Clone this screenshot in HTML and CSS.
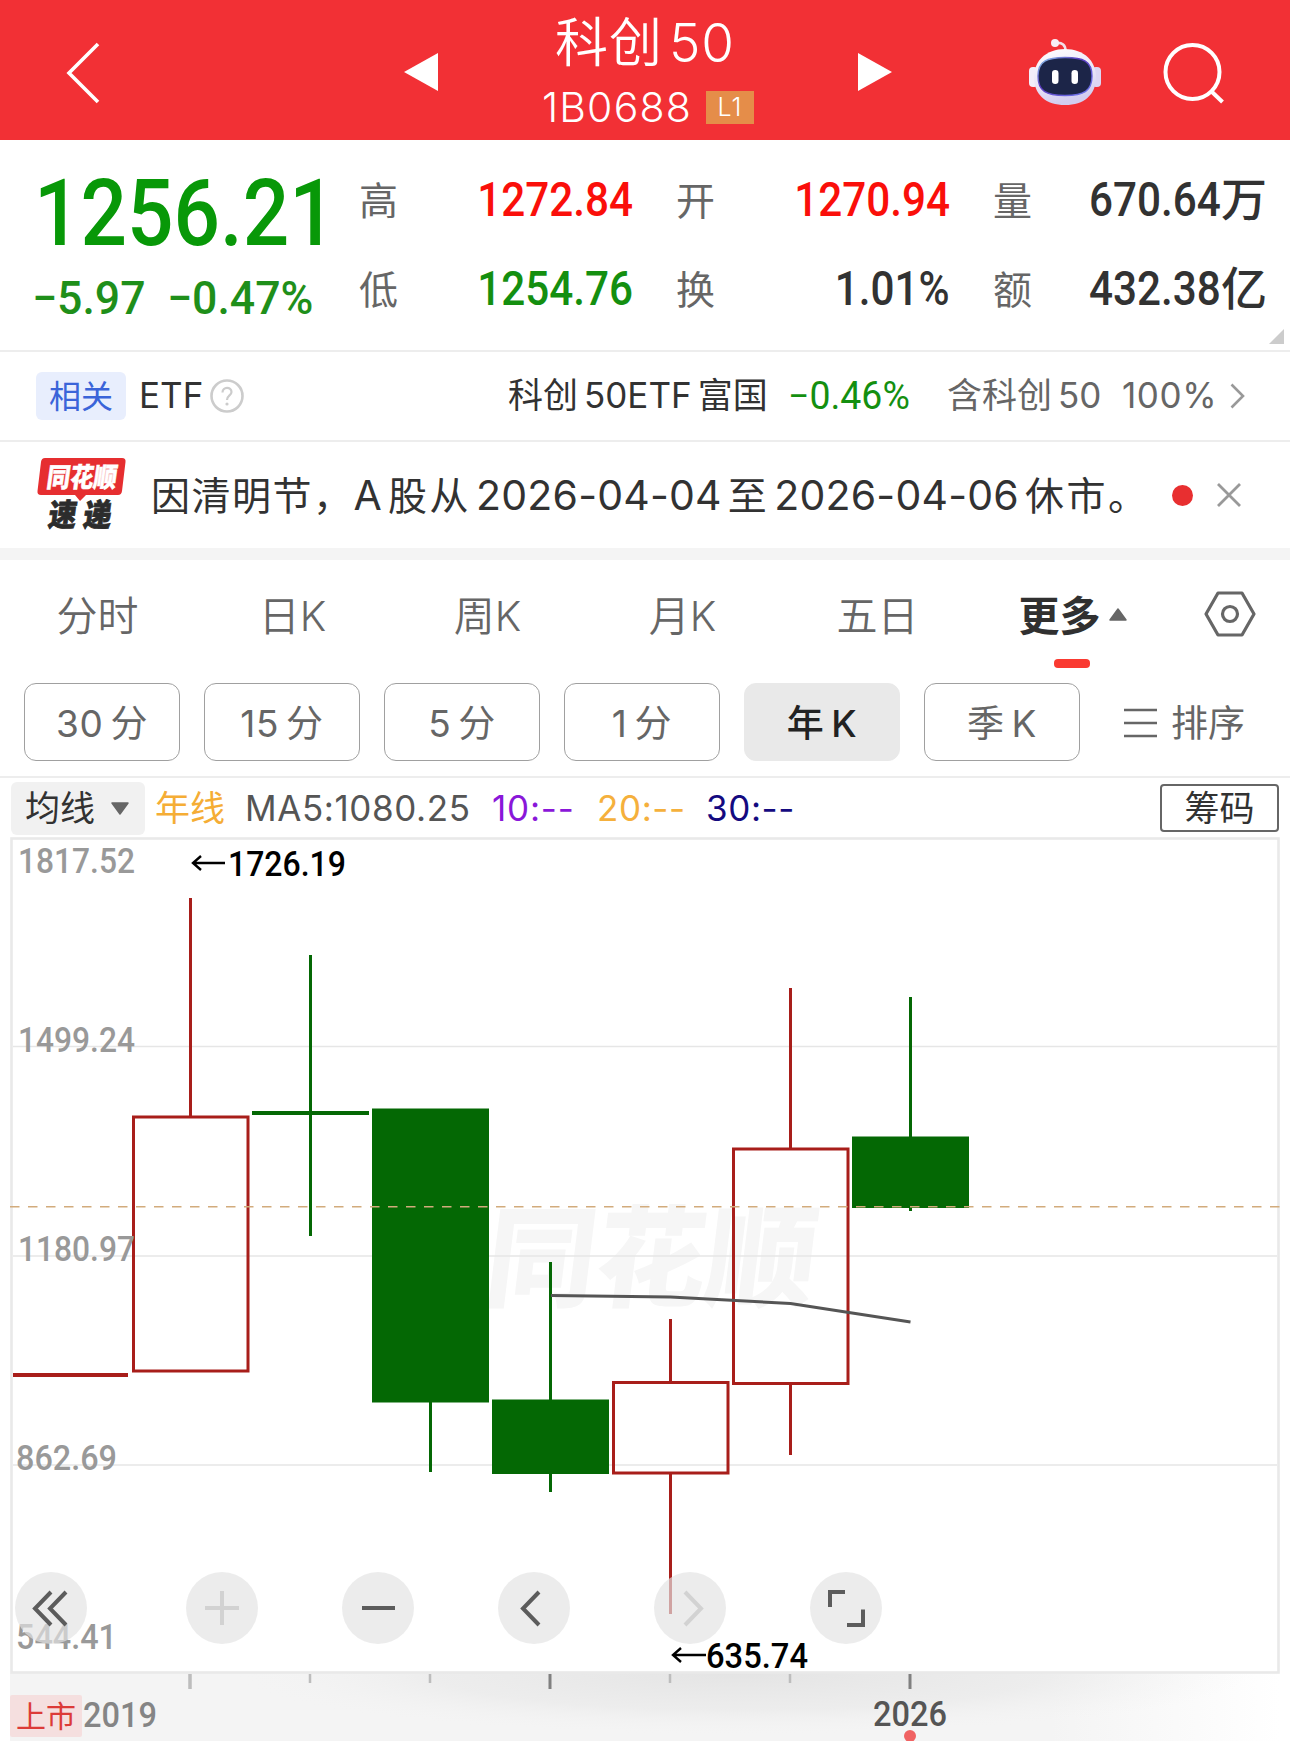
FILE: index.html
```html
<!DOCTYPE html>
<html lang="zh-CN">
<head>
    <meta charset="UTF-8">
    <meta name="viewport" content="width=device-width, initial-scale=1.0">
    <title>科创50 1B0688</title>
    <link rel="stylesheet" href="styles.css">
</head>
<body>
    <!-- 顶部导航 -->
    <header class="header">
        <svg class="back" width="34" height="62" viewBox="0 0 34 62"><path d="M32 2L3 31L32 60" fill="none" stroke="#fff" stroke-width="3.6"/></svg>
        <svg class="switch" width="34" height="38" viewBox="0 0 34 38"><path d="M0 19L34 0V38Z" fill="#fff"/></svg>
        <div class="header-title">
            <div class="stock-name">科创<span class="thin-gap">50</span></div>
            <div class="stock-code">1B0688<span class="level">L1</span></div>
        </div>
        <svg class="switch" width="34" height="38" viewBox="0 0 34 38"><path d="M34 19L0 0V38Z" fill="#fff"/></svg>
        <div class="header-icons">
            <!-- 机器人 -->
            <svg class="robot" width="72" height="68" viewBox="0 0 72 68">
                <defs>
                    <linearGradient id="head" x1="0" y1="0" x2="0.3" y2="1">
                        <stop offset="0" stop-color="#fff"/>
                        <stop offset="0.6" stop-color="#eae5f7"/>
                        <stop offset="1" stop-color="#d2cdf0"/>
                    </linearGradient>
                    <linearGradient id="rim" x1="0" y1="0" x2="1" y2="1">
                        <stop offset="0" stop-color="#8fd0ee"/>
                        <stop offset="0.4" stop-color="#5b3ac0"/>
                        <stop offset="1" stop-color="#6f7cf0"/>
                    </linearGradient>
                </defs>
                <path d="M27 4Q36.500 3 36.500 12" fill="none" stroke="#f3dfe8" stroke-width="2.600"/>
                <circle cx="26" cy="4" r="4" fill="#f8eef5"/>
                <rect x="0" y="28" width="9" height="20" rx="4" fill="#f3eefa"/>
                <rect x="63" y="28" width="9" height="20" rx="4" fill="#ddd6f3"/>
                <path d="M36 10C55 10 67 22 67 38C67 56 55 66 36 66C17 66 5 56 5 38C5 22 17 10 36 10Z" fill="url(#head)"/>
                <path d="M36 18.500C54 18.500 63 22 63 37C63 52 55 56.500 36 56.500C17 56.500 9 52 9 37C9 22 18 18.500 36 18.500Z" fill="#1c2548" stroke="url(#rim)" stroke-width="1.400"/>
                <rect x="23" y="31" width="6.500" height="14" rx="3.200" fill="#fff"/>
                <rect x="42.500" y="31" width="6.500" height="14" rx="3.200" fill="#fff"/>
            </svg>
            <svg width="62" height="62" viewBox="0 0 62 62" fill="none" stroke="#fff" stroke-width="4">
                <circle cx="29.500" cy="30" r="27"/>
                <path d="M48 49L59.500 60"/>
            </svg>
        </div>
    </header>

    <!-- 行情数据 -->
    <section class="quote">
        <div class="price">
            <div class="price-now"><span class="num">1256.21</span></div>
            <div class="price-change"><span class="num">−5.97</span><span class="num">−0.47%</span></div>
        </div>
        <div class="stats">
            <div class="stat"><label>高</label><b class="up"><span class="num">1272.84</span></b></div>
            <div class="stat"><label>开</label><b class="up"><span class="num">1270.94</span></b></div>
            <div class="stat"><label>量</label><b><span class="num">670.64</span>万</b></div>
            <div class="stat"><label>低</label><b class="down"><span class="num">1254.76</span></b></div>
            <div class="stat"><label>换</label><b><span class="num">1.01%</span></b></div>
            <div class="stat"><label>额</label><b><span class="num">432.38</span>亿</b></div>
        </div>
        <div class="corner"></div>
    </section>

    <!-- 相关ETF -->
    <section class="etf">
        <span class="etf-tag">相关</span>
        <span class="etf-label">ETF</span>
        <svg width="34" height="34" viewBox="0 0 34 34" fill="none" stroke="#ccc" stroke-width="2.600">
            <circle cx="17" cy="17" r="15.500"/>
            <path d="M12.500 13.500C12.500 7.500 21.500 7.500 21.500 13C21.500 16.500 17 16.500 17 21" stroke-width="2.200"/>
            <circle cx="17" cy="25" r="1.600" fill="#ccc" stroke="none"/>
        </svg>
        <span class="etf-name">科创<span class="thin-gap">50ETF</span><span class="thin-gap">富国</span></span>
        <span class="etf-change"><span class="num">−0.46%</span></span>
        <span class="etf-share">含科创<span class="thin-gap">50</span></span>
        <span class="etf-ratio">100%</span>
        <svg class="etf-arrow" width="15" height="26" viewBox="0 0 15 26"><path d="M1.500 1.500L13 13L1.500 24.500" fill="none" stroke="#999" stroke-width="2.600"/></svg>
    </section>

    <!-- 公告 -->
    <section class="news">
        <svg class="news-logo" width="90" height="76" viewBox="0 0 90 76">
            <path d="M8 1H85Q89 1 88.500 5L85 34Q84.500 38 81 38H49L43 44L38 38H4Q0 38 0.500 34L4 5Q4.500 1 8 1Z" fill="#e62e30"/>
            <g transform="skewX(-8)">
                <text class="logo-top" x="13" y="29.500" textLength="70" lengthAdjust="spacingAndGlyphs">同花顺</text>
                <text class="logo-bottom" x="20" y="69" textLength="28" lengthAdjust="spacingAndGlyphs">速</text>
                <text class="logo-bottom" x="55" y="69" textLength="28" lengthAdjust="spacingAndGlyphs">递</text>
            </g>
        </svg>
        <p class="news-text"><i class="lead">因清明节，</i>A<i class="thin-gap">股从</i>2026-04-04<i class="thin-gap">至</i>2026-04-06<i class="thin-gap">休市。</i></p>
        <span class="dot"></span>
        <svg width="26" height="26" viewBox="0 0 26 26"><path d="M2 2L24 24M24 2L2 24" fill="none" stroke="#999" stroke-width="2.800"/></svg>
    </section>

    <!-- 周期切换 -->
    <nav class="tabs">
        <div class="tab">分时</div>
        <div class="tab">日K</div>
        <div class="tab">周K</div>
        <div class="tab">月K</div>
        <div class="tab">五日</div>
        <div class="tab active">更多<svg width="18" height="13" viewBox="0 0 18 13"><path d="M9 1L17 12H1Z" fill="#666" stroke="#666" stroke-width="1.500" stroke-linejoin="round"/></svg></div>
        <svg class="setting" width="52" height="46" viewBox="0 0 52 46" fill="none" stroke="#666" stroke-width="3.200">
            <path d="M14 2H38L50 23L38 44H14L2 23Z" stroke-linejoin="round"/>
            <circle cx="26" cy="23" r="7.500"/>
        </svg>
    </nav>
    <div class="periods">
        <div class="period">30<span class="gap">分</span></div>
        <div class="period">15<span class="gap">分</span></div>
        <div class="period">5<span class="gap">分</span></div>
        <div class="period">1<span class="gap">分</span></div>
        <div class="period selected">年<span class="gap">K</span></div>
        <div class="period">季<span class="gap">K</span></div>
        <div class="sort">
            <svg width="33" height="30" viewBox="0 0 33 30"><path d="M0 2H33M0 15H33M0 28H33" stroke="#666" stroke-width="2.400"/></svg>
            排序
        </div>
    </div>

    <!-- 均线指标 -->
    <div class="ma">
        <div class="ma-select">均线<svg width="18" height="13" viewBox="0 0 18 13"><path d="M9 12L17 1H1Z" fill="#666" stroke="#666" stroke-width="1.500" stroke-linejoin="round"/></svg></div>
        <span class="ma-year">年线</span>
        <span class="ma5">MA5:1080.25</span>
        <span class="ma10">10:--</span>
        <span class="ma20">20:--</span>
        <span class="ma30">30:--</span>
        <div class="chips">筹码</div>
    </div>

    <!-- K线图 -->
    <div class="chart">
        <svg class="kline" width="1290" height="904" viewBox="0 837 1290 904">
            <defs>
                <radialGradient id="shade" cx="0.5" cy="0" r="0.5" gradientTransform="translate(0 0) scale(1 2)">
                    <stop offset="0" stop-color="#e4e4e4"/>
                    <stop offset="0.6" stop-color="#ebebeb" stop-opacity="0.8"/>
                    <stop offset="1" stop-color="#f4f4f4" stop-opacity="0"/>
                </radialGradient>
                <linearGradient id="fade" x1="0" x2="1">
                    <stop offset="0" stop-color="#f4f4f4"/>
                    <stop offset="0.82" stop-color="#f4f4f4"/>
                    <stop offset="1" stop-color="#fff"/>
                </linearGradient>
            </defs>

            <!-- 时间轴背景 -->
            <rect x="10" y="1673" width="1270" height="68" fill="url(#fade)"/>
            <rect x="230" y="1673" width="1020" height="62" fill="url(#shade)"/>

            <text class="watermark" transform="translate(482 1298) skewX(-7)" textLength="330" lengthAdjust="spacingAndGlyphs">同花顺</text>

            <!-- 边框和网格 -->
            <path d="M13 1046.500H1277M13 1256H1277M13 1465H1277" stroke="#e6e6e6" stroke-width="1.500"/>
            <rect x="11.500" y="838.500" width="1267" height="834" fill="none" stroke="#e9e9e9" stroke-width="2.600"/>

            <!-- K线 -->
            <g fill="none" stroke="#a81e1a" stroke-width="3">
                <path d="M13 1375H128" stroke-width="4"/>
                <path d="M190.500 898V1116M670.500 1319V1382M670.500 1473V1614M790.500 988V1148M790.500 1384V1455"/>
                <rect x="133.500" y="1117" width="114.500" height="254"/>
                <rect x="613.500" y="1382.500" width="114.500" height="90.500"/>
                <rect x="733.500" y="1149" width="114.500" height="234.500"/>
            </g>
            <g fill="#046804" stroke="none">
                <rect x="252" y="1111" width="117" height="4"/>
                <rect x="309" y="955" width="3" height="281"/>
                <rect x="372" y="1108.500" width="117" height="294"/>
                <rect x="429" y="1402" width="3" height="70"/>
                <rect x="492" y="1399.500" width="117" height="74.500"/>
                <rect x="549" y="1262" width="3" height="230"/>
                <rect x="852" y="1136.500" width="117" height="71.500"/>
                <rect x="909" y="997" width="3" height="214"/>
            </g>
            <path d="M551 1295.500L670.500 1297L790.500 1303.500L910.500 1322" fill="none" stroke="#555" stroke-width="3"/>
            <path d="M10 1206.800H1280" stroke="#d2ab7c" stroke-width="1.600" stroke-dasharray="9.500 8.500"/>

            <!-- 价格刻度 -->
            <g class="scale">
                <text x="18" y="873" textLength="117" lengthAdjust="spacingAndGlyphs">1817.52</text>
                <text x="18" y="1052" textLength="117" lengthAdjust="spacingAndGlyphs">1499.24</text>
                <text x="18" y="1261" textLength="117" lengthAdjust="spacingAndGlyphs">1180.97</text>
                <text x="16" y="1470" textLength="101" lengthAdjust="spacingAndGlyphs">862.69</text>
                <text x="16" y="1649" textLength="101" lengthAdjust="spacingAndGlyphs">544.41</text>
            </g>

            <!-- 最高最低价 -->
            <g class="extreme">
                <path d="M225 863H193M201 856L193 863L201 870M706 1655H673M681 1648L673 1655L681 1662" fill="none" stroke="#000" stroke-width="2.400"/>
                <text x="228" y="876" textLength="118" lengthAdjust="spacingAndGlyphs">1726.19</text>
                <text x="706" y="1668" textLength="102" lengthAdjust="spacingAndGlyphs">635.74</text>
            </g>

            <!-- 时间轴 -->
            <path d="M190 1674V1689" stroke="#bdbdbd" stroke-width="3.500"/>
            <path d="M310 1674V1683M430 1674V1683M670 1674V1683M790 1674V1683" stroke="#bdbdbd" stroke-width="2.500"/>
            <path d="M550 1674V1689M910 1674V1689" stroke="#808080" stroke-width="3"/>
            <rect x="10" y="1695" width="72" height="42" rx="2" fill="#f5dfdf"/>
            <text class="listed" x="16" y="1727">上市</text>
            <text class="year" x="83" y="1727" textLength="74" lengthAdjust="spacingAndGlyphs">2019</text>
            <text class="year current" x="873" y="1726" textLength="74" lengthAdjust="spacingAndGlyphs">2026</text>
            <circle cx="910" cy="1736" r="6" fill="#f06262"/>
        </svg>

        <!-- 图表操作按钮 -->
        <div class="tools">
            <div class="tool"><svg viewBox="0 0 72 72"><path d="M36 20L20 36.500L36 53M51 20L35 36.500L51 53"/></svg></div>
            <div class="tool disabled"><svg viewBox="0 0 72 72"><path d="M19 36H53M36 19V53"/></svg></div>
            <div class="tool"><svg viewBox="0 0 72 72"><path d="M20 36H53"/></svg></div>
            <div class="tool"><svg viewBox="0 0 72 72"><path d="M41 20L25 36.500L41 53"/></svg></div>
            <div class="tool disabled"><svg viewBox="0 0 72 72"><path d="M31 20L47 36.500L31 53"/></svg></div>
            <div class="tool"><svg viewBox="0 0 72 72"><path d="M35 20H20V35M37 53H53V37.500"/></svg></div>
        </div>
    </div>
</body>
</html>
```
FILE: styles.css
```css
* {
    margin: 0;
    padding: 0;
    box-sizing: border-box;
}

body {
    width: 1290px;
    height: 1741px;
    overflow: hidden;
    background-color: #fff;
    color: #323232;
    font-family: Inter, "Noto Sans CJK SC", sans-serif;
    line-height: 1;
    white-space: nowrap;
}

svg {
    display: block;
    flex-shrink: 0;
    overflow: visible;
}

.thin-gap {
    margin-left: 6px;
}

/* 窄体数字 */
.num {
    display: inline-block;
    font-family: Roboto, sans-serif;
    transform: scaleX(0.88);
    transform-origin: right center;
}

/* 顶部导航 */
.header {
    display: grid;
    grid-template-columns: 404px 34px 420px 34px 1fr;
    align-items: center;
    height: 140px;
    background-color: #f23035;
    color: #fff;
}

.back {
    margin: 6px 0 0 66px;
}

.switch {
    margin-top: 3px;
}

.header-title {
    padding-top: 4px;
    text-align: center;
}

.stock-name {
    padding-right: 6px;
    font-size: 53px;
    font-weight: 350;
    letter-spacing: 1px;
}

.stock-code {
    display: flex;
    justify-content: center;
    align-items: center;
    margin-top: 17px;
    font-size: 41px;
    font-weight: 350;
    letter-spacing: 1.2px;
}

.level {
    width: 48px;
    height: 33px;
    margin-left: 14px;
    background-color: #e58d49;
    font-size: 25px;
    line-height: 32px;
}

.header-icons {
    display: flex;
    align-items: center;
    gap: 62px;
    padding: 5px 0 0 137px;
}

/* 行情数据 */
.quote {
    position: relative;
    display: flex;
    height: 212px;
    border-bottom: 2px solid #ededed;
    font-family: "Noto Sans CJK SC", sans-serif;
}

.price {
    width: 359px;
    padding: 17px 0 0 34px;
    color: #089808;
}

.price .num {
    transform-origin: left center;
}

.price-now {
    height: 95px;
    font-size: 93px;
    font-weight: 500;
    line-height: 95px;
}

.price-change {
    display: flex;
    margin-top: 23px;
    font-size: 46px;
    font-weight: 500;
    color: #1f8f1a;
}

.price-change .num {
    width: 137px;
    margin-left: -2px;
    transform: scaleX(0.97);
}

.stats {
    display: grid;
    grid-template-columns: repeat(3, 274px);
    grid-auto-rows: 89px;
    column-gap: 43px;
    padding-top: 14px;
}

.stat {
    display: flex;
    justify-content: space-between;
    align-items: center;
}

.stat label {
    color: #666;
    font-size: 39px;
}

.stat b {
    font-size: 46px;
    font-weight: 500;
}

.stat .num {
    font-size: 48px;
}

.stat .up {
    color: #fa0f0a;
}

.stat .down {
    color: #148f10;
}

.corner {
    position: absolute;
    right: 6px;
    bottom: 6px;
    border-left: 15px solid transparent;
    border-bottom: 15px solid #ccc;
}

/* 相关ETF */
.etf {
    display: flex;
    align-items: center;
    height: 90px;
    padding: 0 45px 1px 36px;
    border-bottom: 2px solid #ededed;
    font-size: 35px;
}

.etf-tag {
    width: 90px;
    height: 48px;
    margin-right: 13px;
    background-color: #e8eefd;
    border-radius: 6px;
    color: #3a64d9;
    font-size: 32px;
    line-height: 49px;
    text-align: center;
}

.etf-label {
    width: 71px;
}

.etf-name {
    width: 280px;
    margin-left: 264px;
}

.etf-change {
    width: 159px;
    color: #148f10;
}

.etf-change .num {
    font-size: 38px;
    transform: scaleX(0.985);
    transform-origin: left center;
}

.etf-share {
    width: 175px;
    color: #666;
}

.etf-ratio {
    color: #666;
    letter-spacing: 0.6px;
}

.etf-arrow {
    margin-left: auto;
}

/* 公告 */
.news {
    display: flex;
    align-items: center;
    height: 118px;
    padding-left: 37px;
    border-bottom: 12px solid #f4f4f4;
}

.news-logo text {
    font-family: "Noto Sans CJK SC", sans-serif;
    font-weight: 900;
}

.news-logo .logo-top {
    font-size: 27px;
    fill: #fff;
    stroke: #fff;
    stroke-width: 0.5;
}

.news-logo .logo-bottom {
    font-size: 31px;
    fill: #2c2c2c;
    stroke: #2c2c2c;
    stroke-width: 0.8;
}

.news-text {
    width: 1021px;
    margin-left: 24px;
    font-size: 41px;
    letter-spacing: 0.2px;
}

.news-text i {
    margin-right: 5px;
    font-size: 39px;
    font-style: normal;
    letter-spacing: 2.500px;
}

.news-text .lead {
    margin-right: 0;
    letter-spacing: 1.500px;
}

.dot {
    width: 21px;
    height: 21px;
    margin-right: 23px;
    background-color: #e82f30;
    border-radius: 50%;
}

/* 周期切换 */
.tabs {
    display: flex;
    align-items: center;
    height: 110px;
    color: #666;
    font-size: 41px;
}

.tab {
    position: relative;
    display: flex;
    justify-content: center;
    align-items: center;
    width: 195px;
    height: 110px;
    padding-top: 2px;
    font-weight: 350;
}

.tab svg {
    margin: -4px 0 0 8px;
}

.tab.active {
    color: #303030;
    font-weight: bold;
}

.tab.active::after {
    content: "";
    position: absolute;
    left: 79px;
    bottom: 2px;
    width: 36px;
    height: 9px;
    background-color: #fa3a31;
    border-radius: 4px;
}

.setting {
    margin: -2px 0 0 34px;
}

.periods {
    display: flex;
    gap: 24px;
    height: 108px;
    padding: 13px 0 0 24px;
    border-bottom: 2px solid #ededed;
    font-size: 37px;
    color: #666;
}

.period {
    display: flex;
    justify-content: center;
    align-items: center;
    width: 156px;
    height: 78px;
    padding-top: 2px;
    border: 1.500px solid #a0a0a0;
    border-radius: 12px;
    letter-spacing: 0.6px;
}

.period .gap {
    margin-left: 7px;
}

.period.selected {
    background-color: #e9e9e9;
    border-color: #e9e9e9;
    color: #222;
    font-weight: 500;
}

.sort {
    display: flex;
    align-items: center;
    gap: 14px;
    height: 80px;
    margin-left: 20px;
}

/* 均线指标 */
.ma {
    display: flex;
    align-items: center;
    height: 59px;
    padding: 1px 11px 0 11px;
    font-size: 35px;
}

.ma-select {
    display: flex;
    align-items: center;
    gap: 16px;
    width: 134px;
    height: 53px;
    padding-left: 14px;
    background-color: #f1f1f1;
    border-radius: 6px;
}

.ma-year {
    width: 90px;
    margin-left: 10px;
    color: #f5ad35;
}

.ma5 {
    width: 247px;
    color: #555;
    letter-spacing: 0.6px;
}

.ma10 {
    width: 105px;
    color: #8a17d9;
    letter-spacing: 0.8px;
}

.ma20 {
    width: 109px;
    color: #f5b03c;
    letter-spacing: 0.6px;
}

.ma30 {
    color: #140a80;
    letter-spacing: 0.6px;
}

.chips {
    width: 119px;
    height: 48px;
    margin-left: auto;
    border: 2px solid #666;
    border-radius: 4px;
    line-height: 44px;
    text-align: center;
}

/* K线图 */
.chart {
    position: relative;
    height: 904px;
}

.kline text {
    font-family: Roboto, "Noto Sans CJK SC", sans-serif;
    font-size: 35px;
    font-weight: 500;
}

.kline .watermark {
    font-size: 110px;
    font-weight: 900;
    fill: #f6f6f6;
}

.kline .scale text {
    fill: #999;
}

.kline .extreme text {
    fill: #000;
}

.kline .listed {
    font-size: 30px;
    font-weight: 400;
    fill: #dc3b38;
}

.kline .year {
    fill: #858585;
}

.kline .current {
    fill: #555;
}

/* 图表操作按钮，浮在K线上方 */
.tools {
    position: absolute;
    left: 15px;
    top: 735px;
    display: flex;
    gap: 84px;
}

.tool {
    width: 72px;
    height: 72px;
    background-color: rgba(227, 227, 227, 0.68);
    border-radius: 50%;
}

.tool:first-child {
    margin-right: 15px;
}

.tool svg {
    fill: none;
    stroke: #5c5c5c;
    stroke-width: 4;
}

.tool.disabled svg {
    stroke: #d2d2d2;
}
```
